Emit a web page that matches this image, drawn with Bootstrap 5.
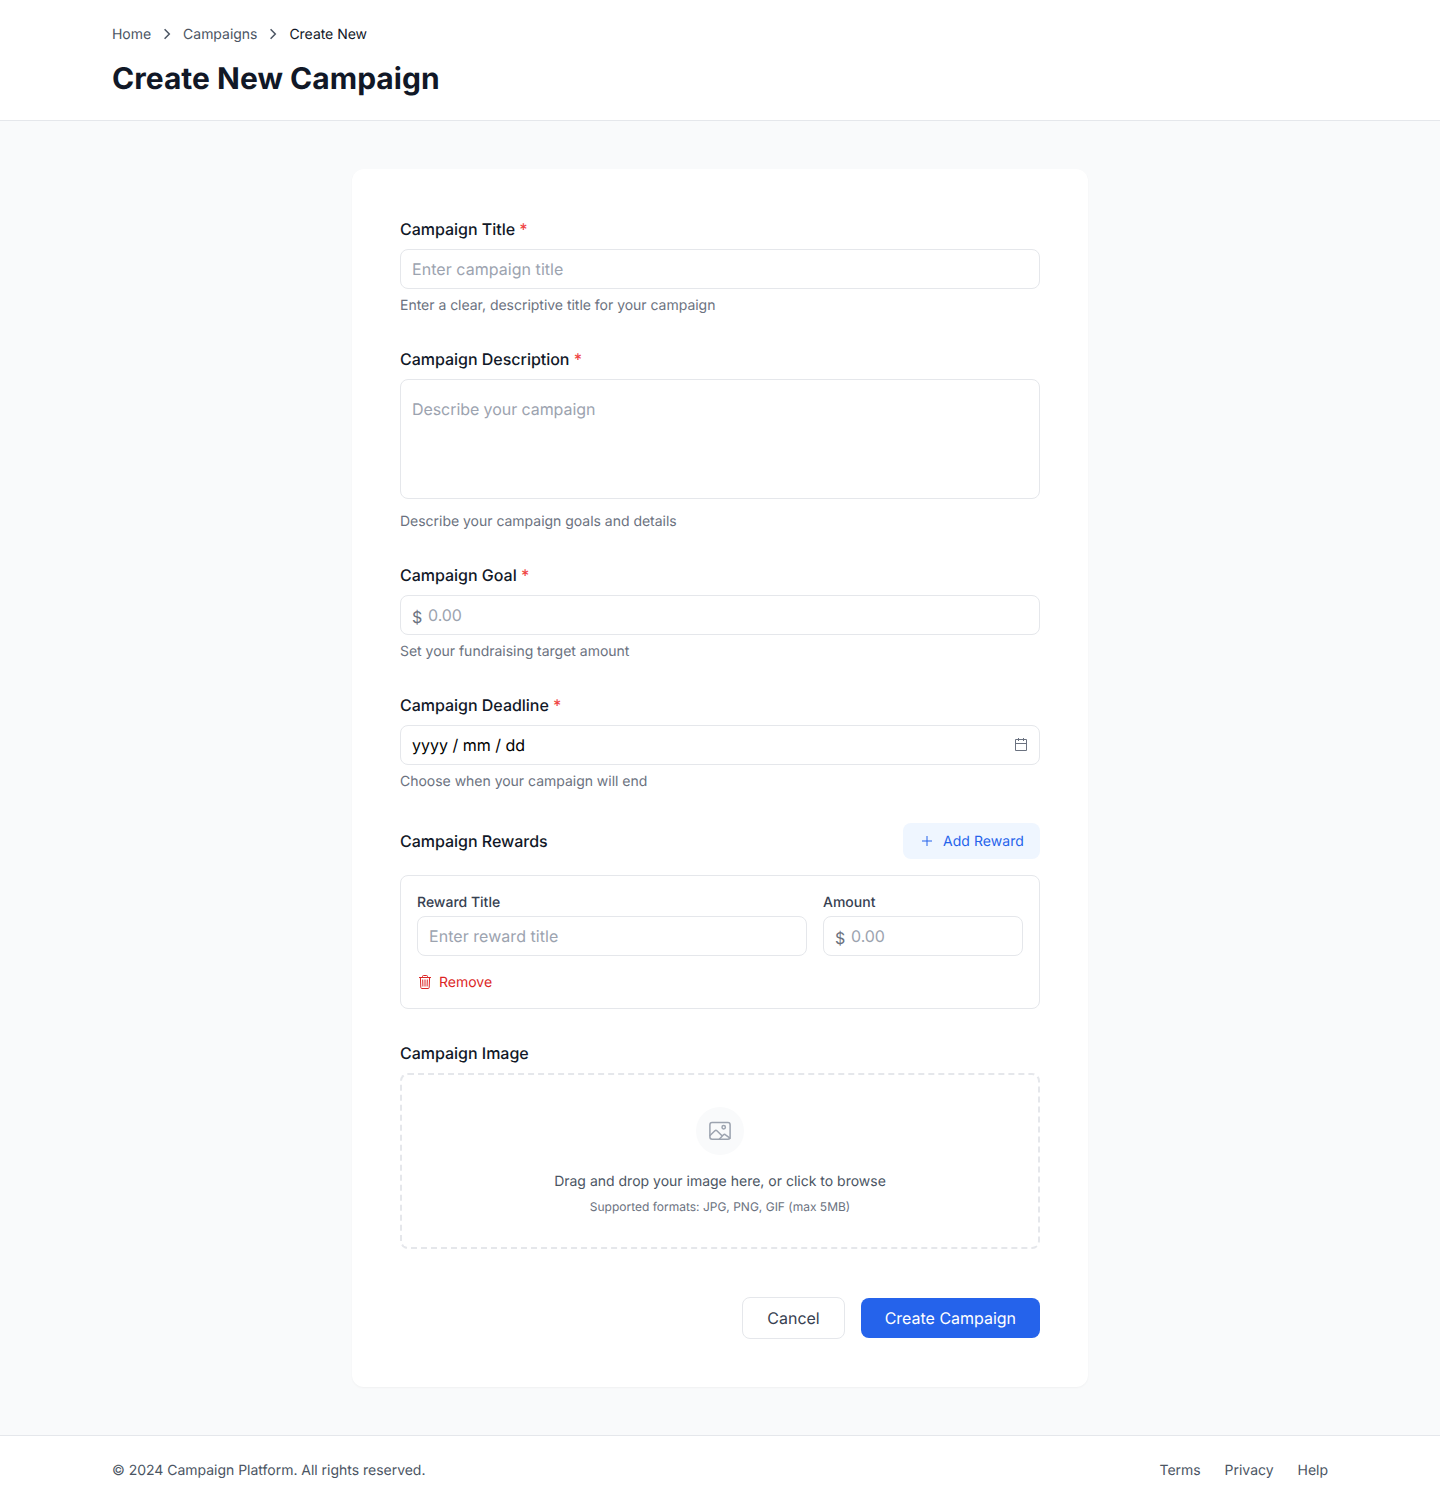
<!DOCTYPE html>
<html lang="en">
<head>
<meta charset="utf-8">
<meta name="viewport" content="width=device-width, initial-scale=1">
<title>Create New Campaign</title>
<link href="https://cdn.jsdelivr.net/npm/bootstrap@5.3.0/dist/css/bootstrap.min.css" rel="stylesheet">
<style>
  body { font-family: Inter, sans-serif; font-size: 16px; line-height: 24px; color: #111827; background: #f9fafb; }
  body, input, textarea, button { text-rendering: geometricPrecision; -webkit-font-smoothing: antialiased; }
  a { text-decoration: none; color: inherit; }
  svg { display: block; flex: none; }
  .line-b { border-bottom: 1px solid #e5e7eb; }
  .line-t { border-top: 1px solid #e5e7eb; }
  .page-wrap { width: 1216px; }
  .txt-sm { display: block; font-size: 14px; line-height: 18px; padding-top: 2px; }
  .txt-xs { font-size: 12px; line-height: 16px; }
  .tone-900 { color: #111827; }
  .tone-600 { color: #4b5563; }
  .tone-500 { color: #6b7280; }
  .crumbs { gap: 8px; letter-spacing: -.03px; }
  .page-title { font-size: 30px; line-height: 34px; padding-top: 2px; font-weight: 700; letter-spacing: .02px; margin: 16px 0 0; }
  .form-panel { width: 736px; padding: 48px; border-radius: 12px; box-shadow: 0 1px 2px rgba(0,0,0,.04); gap: 32px; }
  .field-label { display: block; font-weight: 500; line-height: 24px; letter-spacing: -.02px; margin: 0 0 8px; }
  .req { color: #ef4444; }
  .hint { color: #6b7280; letter-spacing: -.02px; margin: 6px 0 0; }
  .form-control.field { height: 40px; padding: 7px 11px; line-height: 24px; font-size: 16px; border: 1px solid #e5e7eb; border-radius: 8px; background: #fff; color: #000; }
  .form-control.field::placeholder { color: #9ca3af; opacity: 1; letter-spacing: .05px; }
  .form-control.area { height: 120px; padding: 17px 11px; resize: none; margin-bottom: 12px; }
  .form-control.area::placeholder { letter-spacing: -.07px; }
  .form-control.money { padding-left: 27px; }
  .form-control.money::placeholder { letter-spacing: -.05px; }
  .money-sign { position: absolute; left: 12px; top: 10px; color: #6b7280; line-height: 24px; }
  .cal { position: absolute; right: 12px; top: 13px; color: #6b7280; }
  .soft-btn { padding: 8px 16px; gap: 8px; border: 0; border-radius: 8px; background: #eff6ff; color: #2563eb; letter-spacing: .06px; }
  .reward { border: 1px solid #e5e7eb; border-radius: 8px; padding: 16px; margin-top: 16px; }
  .reward-cols { gap: 16px; }
  .amount-col { width: 200px; }
  .sub-label { font-weight: 500; color: #374151; margin-bottom: 4px; }
  .remove-btn { color: #dc2626; background: none; border: 0; padding: 0; gap: 6px; margin-top: 16px; }
  .dropzone { border: 2px dashed #e5e7eb; border-radius: 8px; padding: 32px; }
  .round-icon { width: 48px; height: 48px; background: #f9fafb; color: #9ca3af; margin-bottom: 16px; }
  .form-actions { gap: 16px; margin-top: 16px; }
  .act { border-radius: 8px; padding: 8px 24px; font-size: 16px; line-height: 24px; border: 0; letter-spacing: -.02px; }
  .act-cancel { border: 1px solid #e5e7eb; background: #fff; color: #374151; }
  .act-create { background: #2563eb; color: #fff; }
  .foot { letter-spacing: -.02px; }
</style>
</head>
<body>
<header class="bg-white line-b py-4">
  <div class="page-wrap mx-auto">
    <nav class="crumbs d-flex align-items-center tone-600" aria-label="breadcrumb">
      <a class="txt-sm" href="#">Home</a>
      <svg width="16" height="16" viewBox="0 0 16 16" fill="none" stroke="currentColor" stroke-width="1.5"><path d="M5.600 3.200 10.300 8l-4.700 4.800"/></svg>
      <a class="txt-sm" href="#">Campaigns</a>
      <svg width="16" height="16" viewBox="0 0 16 16" fill="none" stroke="currentColor" stroke-width="1.5"><path d="M5.600 3.200 10.300 8l-4.700 4.800"/></svg>
      <span class="txt-sm tone-900">Create New</span>
    </nav>
    <h1 class="page-title">Create New Campaign</h1>
  </div>
</header>

<main class="py-5">
  <form class="form-panel bg-white mx-auto d-flex flex-column">
    <div>
      <label class="field-label" for="title">Campaign Title <span class="req">*</span></label>
      <input id="title" class="form-control field" placeholder="Enter campaign title">
      <p class="hint txt-sm">Enter a clear, descriptive title for your campaign</p>
    </div>
    <div>
      <label class="field-label" for="desc">Campaign Description <span class="req">*</span></label>
      <textarea id="desc" class="form-control field area" placeholder="Describe your campaign"></textarea>
      <p class="hint txt-sm mt-0">Describe your campaign goals and details</p>
    </div>
    <div>
      <label class="field-label" for="goal">Campaign Goal <span class="req">*</span></label>
      <div class="position-relative">
        <span class="money-sign">$</span>
        <input id="goal" class="form-control field money" placeholder="0.00">
      </div>
      <p class="hint txt-sm">Set your fundraising target amount</p>
    </div>
    <div>
      <label class="field-label" for="deadline">Campaign Deadline <span class="req">*</span></label>
      <div class="position-relative">
        <input id="deadline" class="form-control field" value="yyyy / mm / dd">
        <svg class="cal" width="14" height="14" viewBox="0 0 14 14" fill="none" stroke="currentColor"><path d="M1.5 1.5h11v11h-11zM1.5 5.5h11M4.5 0v3M9.5 0v3"/></svg>
      </div>
      <p class="hint txt-sm">Choose when your campaign will end</p>
    </div>
    <div>
      <div class="d-flex justify-content-between align-items-center">
        <span class="field-label mb-0">Campaign Rewards</span>
        <button type="button" class="soft-btn d-flex align-items-center">
          <svg width="16" height="16" viewBox="0 0 16 16" fill="none" stroke="currentColor"><path d="M8 3v10M3 8h10"/></svg>
          <span class="txt-sm">Add Reward</span>
        </button>
      </div>
      <div class="reward">
        <div class="reward-cols d-flex">
          <div class="flex-grow-1">
            <label class="sub-label txt-sm" for="rt">Reward Title</label>
            <input id="rt" class="form-control field" placeholder="Enter reward title">
          </div>
          <div class="amount-col">
            <label class="sub-label txt-sm" for="ra">Amount</label>
            <div class="position-relative">
              <span class="money-sign">$</span>
              <input id="ra" class="form-control field money" placeholder="0.00">
            </div>
          </div>
        </div>
        <button type="button" class="remove-btn d-flex align-items-center">
          <svg width="16" height="16" viewBox="0 0 16 16" fill="none" stroke="currentColor"><path d="M2 3.500h12M5.500 3.500v-1q0-1 1-1h3q1 0 1 1v1M3.400 3.500l.4 10q.1 1 1 1h6.400q.9 0 1-1l.4-10"/><path d="m5.700 5.500.2 7M8 5.500v7M10.300 5.500l-.2 7"/></svg>
          <span class="txt-sm">Remove</span>
        </button>
      </div>
    </div>
    <div>
      <span class="field-label">Campaign Image</span>
      <div class="dropzone d-flex flex-column align-items-center">
        <span class="round-icon rounded-circle d-flex align-items-center justify-content-center">
          <svg width="24" height="24" viewBox="0 0 24 24" fill="none" stroke="currentColor" stroke-width="1.5" stroke-linecap="round" stroke-linejoin="round"><rect x="1.900" y="3.500" width="20.200" height="16.800" rx="2.200"/><circle cx="15.700" cy="8.300" r="1.700"/><path d="m2 16.500 4.900-4.700q1-.9 2 0l4.600 4.400M11.500 20l4-4.200q1-.9 2 0l4.500 3.400"/></svg>
        </span>
        <span class="txt-sm tone-600 mb-2">Drag and drop your image here, or click to browse</span>
        <span class="txt-xs tone-500">Supported formats: JPG, PNG, GIF (max 5MB)</span>
      </div>
    </div>
    <div class="form-actions d-flex justify-content-end align-items-center">
      <button type="button" class="act act-cancel">Cancel</button>
      <button type="button" class="act act-create">Create Campaign</button>
    </div>
  </form>
</main>

<footer class="bg-white line-t py-4">
  <div class="page-wrap foot mx-auto d-flex justify-content-between tone-600">
    <span class="txt-sm">© 2024 Campaign Platform. All rights reserved.</span>
    <nav class="d-flex gap-4"><a class="txt-sm" href="#">Terms</a><a class="txt-sm" href="#">Privacy</a><a class="txt-sm" href="#">Help</a></nav>
  </div>
</footer>
<script src="https://cdn.jsdelivr.net/npm/bootstrap@5.3.0/dist/js/bootstrap.bundle.min.js"></script>
</body>
</html>
